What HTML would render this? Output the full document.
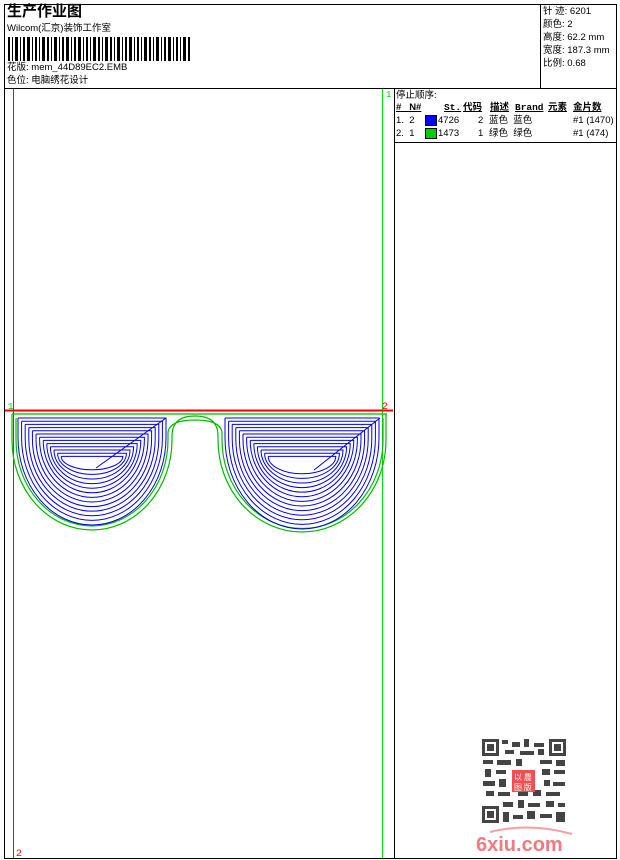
<!DOCTYPE html>
<html><head><meta charset="utf-8"><style>
body{margin:0;width:620px;height:860px;background:#fff;position:relative;overflow:hidden;font-family:"Liberation Sans","Noto Sans CJK SC",sans-serif;color:#000}
.a{position:absolute}
.t{position:absolute;font-size:9.5px;line-height:11px;white-space:nowrap}
</style></head><body>
<div class="a" style="left:4px;top:4px;width:611px;height:853px;border:1px solid #000"></div>
<div class="a" style="left:4px;top:88px;width:612px;height:1px;background:#000"></div>
<div class="a" style="left:540px;top:4px;width:1px;height:84px;background:#000"></div>
<div class="a" style="left:394px;top:88px;width:1px;height:770px;background:#000"></div>
<div class="a" style="left:394px;top:142px;width:222px;height:1px;background:#000"></div>
<div class="t" style="left:7px;top:3px;font-size:15px;line-height:17px;font-weight:bold">生产作业图</div>
<div class="t" style="left:7px;top:23px">Wilcom(汇京)装饰工作室</div>
<svg class="a" style="left:8px;top:37px" width="184" height="24">
<g fill="#000">
<rect x="0" y="0" width="2" height="24"/><rect x="4" y="0" width="1" height="24"/><rect x="7" y="0" width="3" height="24"/><rect x="12" y="0" width="1" height="24"/><rect x="15" y="0" width="2" height="24"/><rect x="19" y="0" width="3" height="24"/><rect x="24" y="0" width="1" height="24"/><rect x="27" y="0" width="2" height="24"/><rect x="31" y="0" width="1" height="24"/><rect x="34" y="0" width="3" height="24"/><rect x="39" y="0" width="2" height="24"/><rect x="43" y="0" width="1" height="24"/><rect x="46" y="0" width="3" height="24"/><rect x="51" y="0" width="1" height="24"/><rect x="54" y="0" width="2" height="24"/><rect x="58" y="0" width="3" height="24"/><rect x="63" y="0" width="1" height="24"/><rect x="66" y="0" width="2" height="24"/><rect x="70" y="0" width="3" height="24"/><rect x="75" y="0" width="1" height="24"/><rect x="78" y="0" width="2" height="24"/><rect x="82" y="0" width="1" height="24"/><rect x="85" y="0" width="3" height="24"/><rect x="90" y="0" width="2" height="24"/><rect x="94" y="0" width="1" height="24"/><rect x="97" y="0" width="3" height="24"/><rect x="102" y="0" width="2" height="24"/><rect x="106" y="0" width="1" height="24"/><rect x="109" y="0" width="3" height="24"/><rect x="114" y="0" width="1" height="24"/><rect x="117" y="0" width="2" height="24"/><rect x="121" y="0" width="3" height="24"/><rect x="126" y="0" width="1" height="24"/><rect x="129" y="0" width="2" height="24"/><rect x="133" y="0" width="1" height="24"/><rect x="136" y="0" width="3" height="24"/><rect x="141" y="0" width="2" height="24"/><rect x="145" y="0" width="1" height="24"/><rect x="148" y="0" width="3" height="24"/><rect x="153" y="0" width="1" height="24"/><rect x="156" y="0" width="2" height="24"/><rect x="160" y="0" width="3" height="24"/><rect x="165" y="0" width="1" height="24"/><rect x="168" y="0" width="2" height="24"/><rect x="172" y="0" width="1" height="24"/><rect x="175" y="0" width="3" height="24"/><rect x="180" y="0" width="2" height="24"/>
</g></svg>
<div class="t" style="left:7px;top:62px">花版: mem_44D89EC2.EMB</div>
<div class="t" style="left:7px;top:75px">色位: 电脑绣花设计</div>
<div class="t" style="left:543px;top:6px">针 迹: 6201</div>
<div class="t" style="left:543px;top:19px">颜色: 2</div>
<div class="t" style="left:543px;top:32px">高度: 62.2 mm</div>
<div class="t" style="left:543px;top:45px">宽度: 187.3 mm</div>
<div class="t" style="left:543px;top:58px">比例: 0.68</div>
<div class="t" style="left:396px;top:90px">停止顺序:</div>
<div class="t" style="left:396px;top:102px;font-weight:bold;text-decoration:underline">#&nbsp;&nbsp; N#</div>
<div class="t" style="left:444px;top:102px;font-weight:bold;text-decoration:underline;font-family:'Liberation Mono','Noto Sans CJK SC',monospace">St.</div>
<div class="t" style="left:463px;top:102px;font-weight:bold;text-decoration:underline">代码</div>
<div class="t" style="left:490px;top:102px;font-weight:bold;text-decoration:underline">描述</div>
<div class="t" style="left:515px;top:102px;font-weight:bold;text-decoration:underline;font-family:'Liberation Mono',monospace">Brand</div>
<div class="t" style="left:548px;top:102px;font-weight:bold;text-decoration:underline">元素</div>
<div class="t" style="left:573px;top:102px;font-weight:bold;text-decoration:underline">金片数</div>
<div class="t" style="left:396px;top:115px">1.&nbsp; 2</div>
<div class="a" style="left:425px;top:115px;width:10px;height:9px;background:#0000ff;border:1px solid #000"></div>
<div class="t" style="left:438px;top:115px">4726</div>
<div class="t" style="left:478px;top:115px">2</div><div class="t" style="left:489px;top:115px">蓝色&nbsp; 蓝色</div>
<div class="t" style="left:573px;top:115px">#1 (1470)</div>
<div class="t" style="left:396px;top:128px">2.&nbsp; 1</div>
<div class="a" style="left:425px;top:128px;width:10px;height:9px;background:#00cc00;border:1px solid #000"></div>
<div class="t" style="left:438px;top:128px">1473</div>
<div class="t" style="left:478px;top:128px">1</div><div class="t" style="left:489px;top:128px">绿色&nbsp; 绿色</div>
<div class="t" style="left:573px;top:128px">#1 (474)</div>

<svg class="a" style="left:0;top:0" width="620" height="860">
<line x1="13.5" y1="89" x2="13.5" y2="858" stroke="#ff0000"/>
<line x1="382.5" y1="89" x2="382.5" y2="858" stroke="#00dd00"/>
<line x1="5" y1="410.5" x2="393" y2="410.5" stroke="#ff0000" stroke-width="2"/>
<text x="386" y="97" font-size="9" fill="#00cc00" font-family="Liberation Mono">1</text>
<text x="8" y="409" font-size="9" fill="#00cc00" font-family="Liberation Mono">1</text>
<text x="382" y="409" font-size="10" fill="#ff0000" font-family="Liberation Mono">2</text>
<text x="16" y="856" font-size="10" fill="#ff0000" font-family="Liberation Mono">2</text>
<g fill="none" stroke="#00bb00" stroke-width="1.2">
<path d="M12 414 L387 414"/>
<path d="M12 414 L12 440 A80 90 0 0 0 172 440 L172 436 Q172 416 195 416 Q218 416 218 436 L218 440 A84 92 0 0 0 386 440 L386 414"/>
<path d="M16 418 L16 440 A76 86 0 0 0 168 440 L168 432 Q170 420 195 420 Q220 420 222 432 L222 440 A80 88 0 0 0 383 440 L383 418"/>
</g>
<g id="blue" fill="none" stroke="#0000ee" stroke-width="1"></g>
<g fill="#444">
<rect x="482" y="739" width="84" height="84" fill="#fff"/>
<rect x="482" y="739" width="17" height="17"/><rect x="485" y="742" width="11" height="11" fill="#fff"/><rect x="487" y="744" width="7" height="7"/>
<rect x="549" y="739" width="17" height="17"/><rect x="552" y="742" width="11" height="11" fill="#fff"/><rect x="554" y="744" width="7" height="7"/>
<rect x="482" y="806" width="17" height="17"/><rect x="485" y="809" width="11" height="11" fill="#fff"/><rect x="487" y="811" width="7" height="7"/>
<rect x="502" y="740" width="6" height="4"/><rect x="512" y="742" width="8" height="5"/><rect x="524" y="739" width="5" height="8"/><rect x="534" y="743" width="10" height="4"/><rect x="505" y="750" width="9" height="4"/><rect x="520" y="751" width="14" height="4"/><rect x="538" y="749" width="6" height="6"/>
<rect x="483" y="760" width="10" height="4"/><rect x="497" y="760" width="14" height="5"/><rect x="516" y="759" width="6" height="7"/><rect x="540" y="760" width="12" height="4"/><rect x="556" y="760" width="9" height="6"/>
<rect x="485" y="769" width="6" height="8"/><rect x="496" y="770" width="10" height="4"/><rect x="542" y="769" width="8" height="6"/><rect x="554" y="770" width="11" height="4"/>
<rect x="483" y="781" width="12" height="5"/><rect x="499" y="779" width="7" height="8"/><rect x="544" y="780" width="6" height="6"/><rect x="553" y="782" width="12" height="4"/>
<rect x="486" y="791" width="8" height="5"/><rect x="498" y="792" width="12" height="4"/><rect x="518" y="791" width="10" height="5"/><rect x="533" y="790" width="8" height="6"/><rect x="546" y="792" width="14" height="4"/>
<rect x="503" y="802" width="10" height="5"/><rect x="518" y="800" width="6" height="8"/><rect x="528" y="803" width="12" height="4"/><rect x="546" y="801" width="8" height="6"/><rect x="558" y="803" width="7" height="4"/>
<rect x="503" y="812" width="6" height="10"/><rect x="513" y="815" width="10" height="4"/><rect x="527" y="811" width="8" height="8"/><rect x="540" y="814" width="12" height="4"/><rect x="556" y="812" width="9" height="10"/>
</g>
<rect x="512" y="770" width="23" height="22" fill="#f05050"/>
<text x="514" y="780" font-size="8" fill="#fff" font-family="Noto Sans CJK SC">以 農</text>
<text x="514" y="790" font-size="8" fill="#fff" font-family="Noto Sans CJK SC">图 版</text>
<path d="M490 832 Q530 822 572 834" stroke="#f5a0a0" stroke-width="2" fill="none"/>
<text x="476" y="851" font-size="20" font-weight="bold" fill="#f07a80" font-family="Liberation Sans">6xiu.com</text>
</svg>
<script>
(function(){
var g=document.getElementById('blue'),d='';
function lens(cx,hw0,b0){
 for(var i=0;i<13;i++){
  var hw=hw0-3.6*i, top=418+3.2*i, bot=b0-4.6*i;
  var sideEnd=Math.min(top+ (440-top)*0.9, 440); if(sideEnd<top) sideEnd=top;
  var ry=bot-sideEnd;
  d+='M'+(cx-hw)+' '+top+'H'+(cx+hw)+'V'+sideEnd+'A'+hw+' '+ry+' 0 0 1 '+(cx-hw)+' '+sideEnd+'V'+top+' ';
 }
}
lens(92,74,525);
lens(302,77,529);
d+='M166 418 L96 468 M380 418 L314 470';
var p=document.createElementNS('http://www.w3.org/2000/svg','path');p.setAttribute('d',d);g.appendChild(p);
})();
</script>
</body></html>
